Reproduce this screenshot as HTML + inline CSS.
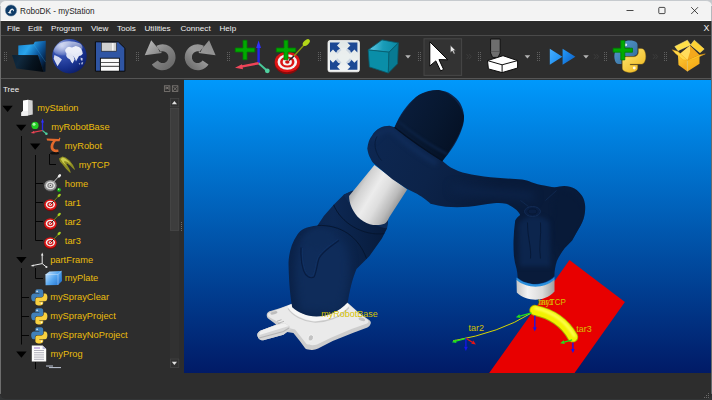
<!DOCTYPE html>
<html><head><meta charset="utf-8"><title>RoboDK - myStation</title>
<style>
*{box-sizing:border-box;margin:0;padding:0}
html,body{width:712px;height:400px;overflow:hidden;background:linear-gradient(#c4c8cc 0,#c4c8cc 30px,#333536 30px);font-family:"Liberation Sans",sans-serif}
#win{position:absolute;left:0;top:0;width:712px;height:398.6px;overflow:hidden;border-radius:6px 6px 6px 6px}
.abs{position:absolute}
#title{left:0;top:0;width:712px;height:21px;background:#f3f3f3;border-top:1px solid #c6cace;border-bottom:1px solid #fdfdfd;border-radius:6px 6px 0 0}
#title .t{position:absolute;left:20px;top:5px;font-size:8.2px;color:#262626;white-space:nowrap;line-height:11px}
#menu{left:0;top:21px;width:712px;height:15px;background:#2b2b2b;border-bottom:1px solid #4a4a4a}
#menu span{position:absolute;top:1.6px;font-size:8.1px;color:#f0f0f0;line-height:11px;white-space:nowrap}
#tool{left:0;top:36px;width:712px;height:43px;background:#2d2d2d;border-bottom:1px solid #555}
#tree{left:0;top:79px;width:184px;height:295px;background:#2d2d2d}
#tree .lbl{position:absolute;font-size:9.3px;color:#eabd0c;line-height:12px;white-space:nowrap}
#view{left:184px;top:79px;width:528px;height:294px;background:linear-gradient(#0099fc,#011a66)}
#status{left:0;top:373px;width:712px;height:27px;background:#2d2d2d}
</style></head><body>
<div id="win">
<div id="title" class="abs"><span class="t">RoboDK - myStation</span></div>
<div id="menu" class="abs">
<span style="left:7px">File</span><span style="left:28px">Edit</span><span style="left:51px">Program</span><span style="left:91px">View</span><span style="left:117px">Tools</span><span style="left:144.5px">Utilities</span><span style="left:180.5px">Connect</span><span style="left:219.5px">Help</span><span style="left:703.6px;font-size:8.8px">X</span>
</div>
<div id="tool" class="abs"></div>
<svg class="abs" style="left:0;top:36px" width="712" height="43" viewBox="0 36 712 43">
<defs>
<g id="grip"><path d="M0.5,0 V10 M2.5,0 V10" stroke="#606060" stroke-width="1" stroke-dasharray="1 1" fill="none"/></g>
<g id="dd"><path d="M0,0 H5.6 L2.8,3.2 Z" fill="#b4b4b4"/></g>
<g id="chev" fill="none" stroke="#3d3d3d" stroke-width="1"><path d="M0,0 L2,2.4 L0,4.8 M2.6,0 L4.6,2.4 L2.6,4.8"/></g>
<g id="plus"><path d="M8,0.300 H12 V8 H19.700 V12 H12 V19.700 H8 V12 H0.300 V8 H8 Z" fill="#00aa00" stroke="#007c00" stroke-width="0.8"/></g>
<linearGradient id="fback" x1="19" y1="44" x2="47" y2="62" gradientUnits="userSpaceOnUse"><stop offset="0" stop-color="#1a86d0"/><stop offset=".3" stop-color="#2aa6ee"/><stop offset=".6" stop-color="#0f5ea4"/><stop offset=".85" stop-color="#062c58"/><stop offset="1" stop-color="#031428"/></linearGradient>
<linearGradient id="ffront" x1="12" y1="55" x2="44" y2="72" gradientUnits="userSpaceOnUse"><stop offset="0" stop-color="#0a2236"/><stop offset=".25" stop-color="#10293e"/><stop offset=".6" stop-color="#06131f"/><stop offset="1" stop-color="#01060c"/></linearGradient>
<radialGradient id="globe" cx="62" cy="46" r="30" gradientUnits="userSpaceOnUse"><stop offset="0" stop-color="#aab8e8"/><stop offset=".35" stop-color="#3450b0"/><stop offset=".75" stop-color="#17308c"/><stop offset="1" stop-color="#0c1e6a"/></radialGradient>
<linearGradient id="gshine" x1="0" y1="40" x2="0" y2="56" gradientUnits="userSpaceOnUse"><stop offset="0" stop-color="#fff" stop-opacity=".8"/><stop offset="1" stop-color="#fff" stop-opacity="0.08"/></linearGradient>
<linearGradient id="undo" x1="145" y1="40" x2="175" y2="72" gradientUnits="userSpaceOnUse"><stop offset="0" stop-color="#c0c0c0"/><stop offset=".45" stop-color="#888888"/><stop offset="1" stop-color="#606060"/></linearGradient>
<linearGradient id="redo" x1="215" y1="40" x2="185" y2="72" gradientUnits="userSpaceOnUse"><stop offset="0" stop-color="#8a8a8a"/><stop offset=".5" stop-color="#9a9a9a"/><stop offset="1" stop-color="#5c5c5c"/></linearGradient>
<linearGradient id="cubetop" x1="368" y1="45" x2="398" y2="48" gradientUnits="userSpaceOnUse"><stop offset="0" stop-color="#6ad0ee"/><stop offset=".5" stop-color="#1a9cb8"/><stop offset="1" stop-color="#0a88a2"/></linearGradient>
<linearGradient id="ffw" x1="550" y1="48" x2="575" y2="65" gradientUnits="userSpaceOnUse"><stop offset="0" stop-color="#48b0ff"/><stop offset=".5" stop-color="#1e8ef0"/><stop offset="1" stop-color="#0c5cc0"/></linearGradient>
<linearGradient id="pyb" x1="0" y1="0" x2="80" y2="80" gradientUnits="userSpaceOnUse"><stop offset="0" stop-color="#5a9fd4"/><stop offset="1" stop-color="#306998"/></linearGradient>
<linearGradient id="pyy" x1="35" y1="30" x2="100" y2="110" gradientUnits="userSpaceOnUse"><stop offset="0" stop-color="#ffe873"/><stop offset="1" stop-color="#f0b820"/></linearGradient>
<linearGradient id="box1" x1="676" y1="50" x2="690" y2="72" gradientUnits="userSpaceOnUse"><stop offset="0" stop-color="#ffdc40"/><stop offset="1" stop-color="#f29a10"/></linearGradient>
<linearGradient id="box2" x1="688" y1="50" x2="700" y2="72" gradientUnits="userSpaceOnUse"><stop offset="0" stop-color="#ffcc30"/><stop offset="1" stop-color="#f0a010"/></linearGradient>
<linearGradient id="fit" x1="0" y1="40" x2="0" y2="72" gradientUnits="userSpaceOnUse"><stop offset="0" stop-color="#dfe6e6"/><stop offset="1" stop-color="#f2f4f4"/></linearGradient>
</defs>
<use href="#grip" x="4" y="52"/><use href="#grip" x="136" y="52"/><use href="#grip" x="227" y="52"/><use href="#grip" x="318" y="52"/><use href="#grip" x="418" y="52"/><use href="#grip" x="478" y="52"/><use href="#grip" x="537" y="52"/><use href="#grip" x="604" y="52"/><use href="#grip" x="664" y="52"/>
<!-- folder -->
<path d="M18.3,45.5 L33.5,44.2 L34.8,41.7 L45.8,40.8 L45.5,71.4 L43.6,72 L37.9,55.2 L18.3,55.2 Z" fill="url(#fback)"/><path d="M33.5,44.2 L45.6,62" stroke="#3ab0f0" stroke-width=".5" opacity=".5"/>
<path d="M12,55 L37.9,55.2 L43.6,72 L16.4,68.6 Z" fill="url(#ffront)"/>
<!-- globe -->
<circle cx="69.5" cy="56.2" r="17.2" fill="url(#globe)"/>
<path d="M65.1,49.9 L67,47.5 L69,46.7 L72,47.4 L75.8,46.1 L79,47 L80.9,48.6 L82.2,51 L82.8,53.7 L81,55.5 L79,56 L77.6,58.5 L76,61.5 L75,58.5 L73.6,56.5 L71.6,55 L69,54 L67,53.7 L65.5,52 Z" fill="#e4e8f6"/>
<path d="M66.6,52.5 L69,52.5 L72,53.5 L73.8,57 L74.6,59.4 L73.6,61.5 L72.7,63.4 L71.2,62 L70,59.5 L67.6,58 L66.2,56 Z" fill="#dfe4f4"/>
<path d="M54.4,55 L58.8,56.9 L62,59.4 L59.4,63.2 L57.5,66.3 L55.6,62.5 L53.7,58.8 Z" fill="#d4daf0"/>
<path d="M80.6,57.6 L82.8,58.6 L82.2,61 L80.8,60 Z M81.6,62.6 L83.2,62.2 L82.4,64.6 L81.2,64.2 Z M78.8,63 L80,63.6 L79.2,65 Z" fill="#c4cce8"/>
<path d="M53.500,51 C56,42 68,38.500 80,43.500 C86,48 81,54 69,55 C61,56 55,55 53.500,51 Z" fill="url(#gshine)" opacity=".85"/>
<!-- floppy -->
<path d="M95.4,41.8 H118.3 L124.9,48.2 V71.2 H95.4 Z" fill="#2f55a4" stroke="#0a0a0a" stroke-width="1"/>
<rect x="101.3" y="42.3" width="15.2" height="8.9" fill="#cfcfcf" stroke="#1a1a1a" stroke-width=".6"/>
<rect x="112" y="43" width="1.6" height="7.4" fill="#f4f4f4"/>
<rect x="100.4" y="58.2" width="19" height="13" fill="#fbfbfb" stroke="#0a0a0a" stroke-width=".9"/>
<path d="M101,62.5 H119 M101,66.4 H119" stroke="#5a5a5a" stroke-width="1.1"/>
<!-- undo -->
<path d="M156.5,45.7 A13.0,13.0 0 1 1 151.8,64.5 L157.7,60.5 A5.9,5.9 0 1 0 159.8,52.0 Z M151.2,40.3 L144.7,55.3 L161.9,52.9 Z" fill="url(#undo)"/>
<!-- redo -->
<path d="M203.8,45.7 A13.0,13.0 0 1 0 208.5,64.5 L202.6,60.5 A5.9,5.9 0 1 1 200.5,52.0 Z M209.1,40.3 L215.6,55.3 L198.4,52.9 Z" fill="url(#redo)"/>
<!-- add frame -->
<use href="#plus" x="235" y="40"/>
<path d="M258.6,63.2 V46" stroke="#2222ee" stroke-width="2.4"/><path d="M258.6,40.6 L261,48 H256.2 Z" fill="#3030ff"/>
<path d="M258.6,63.2 L268.6,72" stroke="#48c898" stroke-width="2"/><circle cx="267.3" cy="70.8" r="2.4" fill="#50d0a0"/>
<path d="M258.6,63.2 L241,66.6" stroke="#ee4458" stroke-width="2.4"/><path d="M235,67.7 L242,64.2 L243,69.2 Z" fill="#f0485c"/>
<!-- add target -->
<ellipse cx="287.3" cy="63.4" rx="12.6" ry="10.6" fill="#8a0a0a"/>
<ellipse cx="287.3" cy="62" rx="12.6" ry="10.2" fill="#dd1414"/>
<ellipse cx="287.3" cy="62" rx="9.8" ry="7.8" fill="#f4f4f4"/>
<ellipse cx="287.3" cy="62" rx="7.2" ry="5.6" fill="#dd1414"/>
<ellipse cx="287.3" cy="62" rx="4.6" ry="3.5" fill="#f4f4f4"/>
<ellipse cx="287.3" cy="62" rx="2.2" ry="1.7" fill="#cc1010"/>
<use href="#plus" x="276" y="40"/>
<path d="M289,60.5 L294,56" stroke="#222" stroke-width="1.6"/><path d="M294,56 L304.5,44.5" stroke="#8c9a10" stroke-width="1.3"/>
<ellipse cx="306.3" cy="42.6" rx="4.2" ry="2.4" transform="rotate(-42 306.3 42.6)" fill="#b4d818"/>
<!-- fit -->
<rect x="328" y="40.6" width="31.4" height="31.2" rx="2" fill="url(#fit)" stroke="#fafafa" stroke-width=".8"/>
<g fill="#1c4894"><path d="M330,42.6 H340 L337,45.6 L341.5,50 L337.4,54.1 L333,49.6 L330,52.6 Z"/><path d="M357.4,42.6 V52.6 L354.4,49.6 L350,54.1 L345.9,50 L350.4,45.6 L347.4,42.6 Z"/><path d="M330,69.8 V59.8 L333,62.8 L337.4,58.3 L341.5,62.4 L337,66.8 L340,69.8 Z"/><path d="M357.4,69.8 H347.4 L350.4,66.8 L345.9,62.4 L350,58.3 L354.4,62.8 L357.4,59.8 Z"/></g>
<circle cx="343.7" cy="56.2" r="8.5" fill="#eaefef" opacity=".85"/>
<!-- cube -->
<path d="M382,39.9 L398.3,43 L389,52.2 L368.2,49.9 Z" fill="url(#cubetop)" stroke="#075e70" stroke-width=".8" stroke-linejoin="round"/>
<path d="M368.2,49.9 L389,52.2 L388.3,73.1 L369.4,66.9 Z" fill="#0a8ea8" stroke="#075e70" stroke-width=".8" stroke-linejoin="round"/>
<path d="M389,52.2 L398.3,43 L397.5,63.8 L388.3,73.1 Z" fill="#087a92" stroke="#075e70" stroke-width=".8" stroke-linejoin="round"/>
<use href="#dd" x="405.2" y="55.2"/>
<!-- cursor button -->
<rect x="424" y="38.8" width="37.6" height="36.6" fill="#333333" stroke="#474747" stroke-width="1"/>
<path d="M429.8,41.8 L429.8,66 L435.8,60.9 L440.6,70.9 L443.6,69.4 L439,59.6 L447.8,59.8 Z" fill="#ffffff" stroke="#050505" stroke-width="1" stroke-linejoin="round"/>
<path d="M450.4,45.3 V52.4 L452.3,51 L453.9,54 L455.1,53.4 L453.6,50.5 L455.6,50.4 Z" fill="#e8e8e8" stroke="#3a3a3a" stroke-width=".5"/>
<use href="#chev" x="466.6" y="54.2"/>
<!-- mill -->
<path d="M490.6,39 H500.2 V53 L498,57.4 H492.6 L490.6,53 Z" fill="#6e6e6e" stroke="#0c0c0c" stroke-width=".9"/>
<path d="M490.6,51.5 H500.2" stroke="#4a4a4a" stroke-width=".6"/>
<path d="M487.5,60.6 L503,55.7 L517.6,60.6 L517.6,68 L502.1,72.6 L488.4,68.9 Z" fill="#ffffff" stroke="#0c0c0c" stroke-width="1" stroke-linejoin="round"/>
<path d="M487.5,60.6 L502.1,64.8 L517.6,60.6 M502.1,64.8 V72.6" fill="none" stroke="#0c0c0c" stroke-width="1"/>
<use href="#dd" x="524.6" y="55.2"/>
<!-- ff -->
<path d="M549.8,48.8 L562.4,56.8 L549.8,64.8 Z M562.6,48.8 L575.4,56.8 L562.6,64.8 Z" fill="url(#ffw)"/>
<use href="#dd" x="583.2" y="55.2"/>
<use href="#chev" x="594" y="54.2"/>
<!-- python -->
<g transform="translate(614.3,40.6) scale(0.283)">
<path d="M54.9,0 C50.3,0 45.9,0.4 42.1,1.1 C30.8,3.1 28.7,7.3 28.7,15 V25.2 H55.4 V28.600 H18.700 C10.900,28.600 4.100,33.300 2,42.200 C-0.500,52.400 -0.600,58.800 2,69.500 C3.900,77.400 8.400,83 16.200,83 H25.400 V70.800 C25.400,62 33,54.200 42.100,54.200 H68.800 C76.200,54.200 82.100,48.100 82.100,40.700 V15 C82.100,7.800 76,2.300 68.800,1.100 C64.200,0.300 59.500,0 54.900,0 Z" fill="url(#pyb)"/>
<circle cx="40.4" cy="14.9" r="5" fill="#e8f0f8"/>
<path d="M85.600,28.600 V40.500 C85.600,49.700 77.800,57.500 68.900,57.500 H42.100 C34.800,57.500 28.700,63.800 28.700,71.100 V96.600 C28.700,103.900 35,108.200 42.100,110.300 C50.600,112.800 58.700,113.200 68.900,110.300 C75.600,108.300 82.200,104.400 82.200,96.600 V86.400 H55.500 V83 H95.500 C103.300,83 106.200,77.600 108.900,69.500 C111.700,61.100 111.600,53 108.900,42.200 C107,34.500 103.300,28.600 95.500,28.600 Z" fill="url(#pyy)" stroke="#c89a18" stroke-width="1.5"/>
<circle cx="70.5" cy="96.8" r="5" fill="#fffbe8"/>
</g>
<use href="#plus" x="612.8" y="40.2" transform="translate(0 0)"/>
<use href="#chev" x="653" y="54.2"/>
<!-- box -->
<path d="M678,55.400 L690,45.500 L699.500,54.900 L687.400,60.200 Z" fill="#f4a81c"/>
<path d="M678,55.400 L690,45.500 L690,52 L687.400,60.200 Z" fill="#ffdc5c"/>
<path d="M674.800,46.500 L687.400,40.200 L690.600,44.900 L678,50.700 Z" fill="#ffe048" stroke="#ffec90" stroke-width=".5"/>
<path d="M690.600,44.900 L694.300,40.200 L704.200,49.100 L700,52.800 Z" fill="#ffd234" stroke="#ffe880" stroke-width=".5"/>
<path d="M678,55.400 L687.400,60.200 L687.400,71.400 L678.500,64.900 Z" fill="url(#box1)"/>
<path d="M687.400,60.200 L699.500,54.900 L699.500,63.800 L687.400,71.400 Z" fill="url(#box2)"/>
<path d="M687.400,60.200 V71.400" stroke="#ffe890" stroke-width=".6"/>
<path d="M672.200,49.700 L678,51.500 L687.400,60.200 L683,59.800 L675.500,53.500 Z" fill="#ffd848" stroke="#f0a010" stroke-width=".4"/>
<path d="M687.400,60.200 L699.500,54.900 L705.300,53.900 L693.200,59.600 Z" fill="#ffc428" stroke="#f0a010" stroke-width=".4"/>
</svg>

<div id="tree" class="abs"><span class="lbl" style="left:3px;top:4.6px;color:#f0f0f0;font-size:8px">Tree</span><span class="lbl" style="left:37.2px;top:23.3px">myStation</span><span class="lbl" style="left:51.2px;top:42.3px">myRobotBase</span><span class="lbl" style="left:64.8px;top:61.3px">myRobot</span><span class="lbl" style="left:78.8px;top:80.3px">myTCP</span><span class="lbl" style="left:64.8px;top:98.8px">home</span><span class="lbl" style="left:64.8px;top:117.8px">tar1</span><span class="lbl" style="left:64.8px;top:136.8px">tar2</span><span class="lbl" style="left:64.8px;top:155.8px">tar3</span><span class="lbl" style="left:50.2px;top:174.8px">partFrame</span><span class="lbl" style="left:64.7px;top:193.3px">myPlate</span><span class="lbl" style="left:50.2px;top:212.3px">mySprayClear</span><span class="lbl" style="left:50.2px;top:231.3px">mySprayProject</span><span class="lbl" style="left:50.2px;top:250.3px">mySprayNoProject</span><span class="lbl" style="left:50.6px;top:269.3px">myProg</span></div>
<svg class="abs" style="left:0;top:79px" width="184" height="295" viewBox="0 79 184 295">
<defs>
<g id="tri"><path d="M0,0 H10.4 L5.2,6.2 Z" fill="#000"/></g>
<g id="tgt">
<ellipse cx="0" cy="1" rx="6.2" ry="5.6" fill="#7a0808"/>
<ellipse cx="0" cy="0" rx="6.2" ry="5.4" fill="#dc1818"/>
<ellipse cx="0" cy="0" rx="4.6" ry="3.9" fill="#f2f2f2"/>
<ellipse cx="0" cy="0" rx="3.1" ry="2.6" fill="#dc1818"/>
<ellipse cx="0" cy="0" rx="1.7" ry="1.4" fill="#f2f2f2"/>
<ellipse cx="0" cy="0" rx=".8" ry=".7" fill="#c01010"/>
<path d="M0.8,-0.8 L3.5,-3.5" stroke="#222" stroke-width="1"/><path d="M3.5,-3.5 L8.2,-8.6" stroke="#7c8c10" stroke-width=".9"/>
<ellipse cx="8.8" cy="-9.2" rx="2" ry="1.2" transform="rotate(-45 8.8 -9.2)" fill="#a8d020"/>
</g>
<g id="py"><g transform="scale(0.146)">
<path d="M54.9,0 C50.3,0 45.9,0.4 42.1,1.1 C30.8,3.1 28.7,7.3 28.7,15 V25.2 H55.4 V28.600 H18.700 C10.900,28.600 4.100,33.300 2,42.200 C-0.500,52.400 -0.600,58.800 2,69.500 C3.900,77.400 8.400,83 16.200,83 H25.400 V70.800 C25.400,62 33,54.200 42.100,54.200 H68.800 C76.200,54.200 82.100,48.100 82.100,40.700 V15 C82.100,7.800 76,2.300 68.800,1.100 C64.200,0.300 59.500,0 54.900,0 Z" fill="#4180b8"/>
<circle cx="40.4" cy="14.9" r="5.500" fill="#e8f0f8"/>
<path d="M85.600,28.600 V40.500 C85.600,49.700 77.800,57.500 68.900,57.500 H42.100 C34.800,57.500 28.700,63.800 28.700,71.100 V96.600 C28.700,103.900 35,108.200 42.100,110.300 C50.600,112.800 58.700,113.200 68.900,110.300 C75.600,108.300 82.200,104.400 82.200,96.600 V86.400 H55.500 V83 H95.500 C103.300,83 106.200,77.600 108.900,69.500 C111.700,61.100 111.600,53 108.900,42.200 C107,34.500 103.300,28.600 95.500,28.600 Z" fill="#f8d040"/>
<circle cx="70.5" cy="96.8" r="5.500" fill="#fffbe8"/>
</g></g>
<linearGradient id="st" x1="21" y1="0" x2="33" y2="0" gradientUnits="userSpaceOnUse"><stop offset="0" stop-color="#ffffff"/><stop offset=".55" stop-color="#e8e8e8"/><stop offset="1" stop-color="#a8a8a8"/></linearGradient>
<linearGradient id="plt" x1="45" y1="271" x2="62" y2="285" gradientUnits="userSpaceOnUse"><stop offset="0" stop-color="#d8ecff"/><stop offset=".5" stop-color="#58a8f0"/><stop offset="1" stop-color="#1868c8"/></linearGradient>
</defs>
<!-- header -->
<g fill="none" stroke="#8c8782" stroke-width=".7"><rect x="164.3" y="85.8" width="5.6" height="5.800"/><rect x="172.300" y="85.800" width="5.600" height="5.800"/><path d="M173,86.500 L177.200,90.900 M177.200,86.500 L173,90.900"/><path d="M165,88 H169.200 M166,86.500 L168.500,89.500 M168.500,86.500 L166,89.500"/></g>
<!-- connector lines -->
<g stroke="#050505" stroke-width="1" fill="none">
<path d="M21.5,136 V249.5 M21.5,268 V344.5"/>
<path d="M35.5,155 V240.5 M35.5,183.5 H43 M35.5,202.5 H43 M35.5,221.5 H43 M35.5,240.5 H43"/>
<path d="M49.5,154 V164.5 H56"/>
<path d="M35.5,268 V278.5 H43"/>
<path d="M21.5,297.5 H29 M21.5,316.5 H29 M21.5,335.5 H29"/>
<path d="M35.5,362 V369"/>
</g>
<!-- arrows -->
<use href="#tri" x="2.4" y="105.8"/><use href="#tri" x="16" y="124.8"/><use href="#tri" x="30" y="143.6"/><use href="#tri" x="16.2" y="257"/><use href="#tri" x="16.2" y="351.6"/>
<!-- station icon -->
<path d="M23,100.400 L28,99.800 L28,115.600 L21.400,116 L21.400,112.500 L23,111 Z" fill="#fdfdfd"/>
<path d="M28,99.800 L32.600,100.600 L32.800,114.600 L28,115.600 Z" fill="#d2d2d2"/>
<path d="M21.400,112.500 L23,111 L28,111 V115.600 L21.400,116 Z" fill="#f0f0f0"/>
<!-- robotbase icon -->
<circle cx="35" cy="125.4" r="3.6" fill="#22cc22"/><circle cx="34" cy="124.2" r="1.5" fill="#a8f8a8"/>
<path d="M42.5,130.5 V121" stroke="#2828f0" stroke-width="1.3"/><path d="M42.5,118.6 L43.9,122.4 H41.1 Z" fill="#3030ff"/>
<path d="M42.5,130.5 L33,132.4" stroke="#e84050" stroke-width="1.2"/><path d="M30.6,132.9 L34,131 L34.5,133.6 Z" fill="#f04858"/>
<path d="M42.5,130.5 L46.6,134" stroke="#48c898" stroke-width="1.1"/><circle cx="46.4" cy="133.8" r="1.3" fill="#50d0a0"/>
<!-- robot icon -->
<ellipse cx="54.600" cy="153.200" rx="4.600" ry="1.300" fill="#101010"/>
<path d="M46.600,138.400 L58.800,139 L59.400,137.600 L60.400,138 L59.600,141.200 L55.800,141.200 C54,143.400 53,145.400 53.400,147.400 C53.800,149.200 55.600,150 58.200,149.400 L58.600,151.800 C55,152.800 51.800,151.600 50.800,148.800 C50,146.200 51,143.400 53,141 L47,140.600 Z" fill="#e26a2c"/>
<!-- tcp icon -->
<path d="M59,158.600 L62.400,156.400 L65.600,157.400 L69.600,160.600 L73,165 L75,169.400 L74.400,169.800 L70,165.600 L67,163.400 L66.400,164 L69.200,168.400 L70.800,172.400 L70,172.800 L66,168.800 L62.600,164.600 L60,161.800 Z" fill="#8e8e22"/>
<path d="M60.600,159 L62.800,157.600 L65.200,158.600 L68.600,161.200 L71.600,165 L67.600,162 L64.600,161 L64,162 L66.600,166 L62.800,162.600 Z" fill="#cccc4c"/>
<!-- home -->
<g transform="translate(50.4 185.4)"><ellipse cx="0" cy="1" rx="6.2" ry="5.6" fill="#3c3c3c"/><ellipse cx="0" cy="0" rx="6.2" ry="5.4" fill="#8c8c8c"/><ellipse cx="0" cy="0" rx="4.6" ry="3.9" fill="#e6e6e6"/><ellipse cx="0" cy="0" rx="3.1" ry="2.6" fill="#8c8c8c"/><ellipse cx="0" cy="0" rx="1.7" ry="1.4" fill="#e6e6e6"/><ellipse cx="0" cy="0" rx=".8" ry=".7" fill="#555"/><path d="M0.8,-0.8 L8.4,-9" stroke="#c8c8c8" stroke-width="1"/><ellipse cx="9" cy="-9.6" rx="2" ry="1.3" transform="rotate(-45 9 -9.6)" fill="#f0f0f0"/><circle cx="8.6" cy="4.4" r="1.9" fill="#18c018"/><circle cx="8.2" cy="3.9" r=".7" fill="#b0ffb0"/></g>
<use href="#tgt" x="50.4" y="204.6"/><use href="#tgt" x="50.4" y="223.6"/><use href="#tgt" x="50.4" y="242.6"/>
<!-- partFrame icon -->
<g stroke="#e8e8e8" stroke-width="1" fill="none"><path d="M42.2,263.6 V254.6 M42.2,263.6 L32.4,265.6 M42.2,263.6 L46.4,267"/></g>
<path d="M42.2,252.6 L43.4,255.6 H41 Z M30.6,266 L33.4,264.4 L33.8,266.6 Z" fill="#f0f0f0"/><circle cx="46.4" cy="267" r="1.1" fill="#e0e0e0"/>
<!-- plate icon -->
<path d="M45.4,274.6 L49.4,271.4 L61.6,271 L62,281 L58,285 L45.6,285.2 Z" fill="url(#plt)"/>
<path d="M45.4,274.6 L58,274.4 L61.6,271 M58,274.4 V285" stroke="#e8f4ff" stroke-width=".6" fill="none" opacity=".7"/>
<!-- python -->
<use href="#py" x="31.2" y="289.2"/><use href="#py" x="31.2" y="308.2"/><use href="#py" x="31.2" y="327.2"/>
<!-- prog -->
<path d="M31.8,345.6 H42.6 L46.2,349 V361.6 H31.8 Z" fill="#fbfbfb"/><path d="M42.6,345.6 V349 H46.2 Z" fill="#b8b8d8"/>
<path d="M34,350.5 H44 M34,352.7 H44 M34,354.9 H44 M34,357.1 H44 M34,359.3 H44" stroke="#9090a0" stroke-width=".7"/><path d="M34,348 H40" stroke="#8050c0" stroke-width=".8"/>
<path d="M46,366 H53 M49,367.6 H61" stroke="#c0c8d8" stroke-width="1"/>
<!-- scrollbar -->
<rect x="170" y="98" width="9.2" height="270" fill="#313131"/><path d="M181.500,222 V231" stroke="#6a6a6a" stroke-width="1" stroke-dasharray="1 1"/>
<rect x="170.400" y="98.400" width="8.400" height="8.400" fill="#303030" stroke="#464646" stroke-width=".7"/><path d="M171.800,104.200 L174.400,101 L177,104.200 Z" fill="#e0e0e0"/>
<rect x="170.400" y="359" width="8.400" height="8.400" fill="#303030" stroke="#464646" stroke-width=".7"/><path d="M171.800,361.800 L174.400,365 L177,361.800 Z" fill="#e0e0e0"/>
<rect x="170.400" y="108.400" width="8.400" height="122" fill="#3d3d3d" stroke="#4a4a4a" stroke-width=".7"/>
</svg>

<svg class="abs" style="left:183.5px;top:79.5px" width="528.5" height="293.7" viewBox="183.5 79.5 528.5 293.7">
<defs>
<linearGradient id="bg" x1="0" y1="79" x2="0" y2="373" gradientUnits="userSpaceOnUse"><stop offset="0" stop-color="#0099fc"/><stop offset="1" stop-color="#011a66"/></linearGradient>
<linearGradient id="cyl" x1="350" y1="196" x2="389" y2="219" gradientUnits="userSpaceOnUse"><stop offset="0" stop-color="#b4b4b4"/><stop offset=".12" stop-color="#d2d2d2"/><stop offset=".38" stop-color="#ececec"/><stop offset=".6" stop-color="#dedede"/><stop offset=".85" stop-color="#bababa"/><stop offset="1" stop-color="#989898"/></linearGradient>
<linearGradient id="fl" x1="516" y1="0" x2="553" y2="0" gradientUnits="userSpaceOnUse"><stop offset="0" stop-color="#c6c6c6"/><stop offset=".3" stop-color="#f3f3f3"/><stop offset=".7" stop-color="#dadada"/><stop offset="1" stop-color="#a4a4a4"/></linearGradient>
<linearGradient id="base" x1="288" y1="0" x2="388" y2="0" gradientUnits="userSpaceOnUse"><stop offset="0" stop-color="#0a2147"/><stop offset=".45" stop-color="#0d2853"/><stop offset="1" stop-color="#071a3a"/></linearGradient>
<linearGradient id="arm" x1="372" y1="140" x2="490" y2="200" gradientUnits="userSpaceOnUse"><stop offset="0" stop-color="#0d2751"/><stop offset=".5" stop-color="#0c2349"/><stop offset=".8" stop-color="#0a1e40"/><stop offset="1" stop-color="#091b3a"/></linearGradient>
<linearGradient id="plate" x1="260" y1="305" x2="360" y2="345" gradientUnits="userSpaceOnUse"><stop offset="0" stop-color="#e8e8e8"/><stop offset="1" stop-color="#cfcfcf"/></linearGradient>
<filter id="b2" color-interpolation-filters="sRGB" filterUnits="userSpaceOnUse" x="150" y="50" width="600" height="350"><feGaussianBlur stdDeviation="2"/></filter>
<filter id="b4" color-interpolation-filters="sRGB" filterUnits="userSpaceOnUse" x="150" y="50" width="600" height="350"><feGaussianBlur stdDeviation="4"/></filter>
<filter id="b1" color-interpolation-filters="sRGB" filterUnits="userSpaceOnUse" x="150" y="50" width="600" height="350"><feGaussianBlur stdDeviation="0.8"/></filter>
<linearGradient id="cap" x1="400" y1="100" x2="462" y2="135" gradientUnits="userSpaceOnUse"><stop offset="0" stop-color="#0a1d3c"/><stop offset=".6" stop-color="#07172f"/><stop offset="1" stop-color="#051125"/></linearGradient>
<clipPath id="armclip"><use href="#armp"/></clipPath>
<clipPath id="baseclip"><use href="#basep"/></clipPath>
</defs>
<rect x="183" y="79" width="530" height="295" fill="url(#bg)"/>
<!-- red plate -->
<polygon points="569,259.600 624.400,301.400 573,374 487.600,374" fill="#e80000"/>
<!-- base plate -->
<path d="M266.4,313.3 C267,311.600 268.500,310.800 270,310.500 L279.200,307.800 L289.300,304.100 L346.800,302 L359.600,313.300 L368.700,319.600 C370.400,320.800 370.600,322.400 370.100,323.300 C369.500,325 368.500,326.200 366.900,327 L352.200,332.400 L332.200,340.600 L317.600,348 C315.500,349 313.500,349.500 311.200,349.400 C308.500,349.300 306.500,349 304.800,348 L299.300,340.600 L292.900,332.400 L286.500,331.500 L282.900,334.300 L262.800,339.700 C260.800,339.800 259.200,339.200 258.200,337.900 C257,336.500 256.600,334.800 256.900,333.300 C257.600,331.600 259,330.400 261,329.700 L275.600,324.200 L273.700,322.400 L267.300,317.800 C266.200,316.500 266,314.800 266.400,313.300 Z" fill="#cdcdcd"/>
<path d="M267.500,313 L279.200,308.200 L289.300,304.600 L346.800,302.500 L359,313.500 L367.500,319.800 C368.500,321 368,322.200 366.500,323 L351,328.600 L331,337 L316.500,344 C313.500,345.200 309,345 306,343.600 L300.500,336.500 L294.500,329 L288,327.500 L277.500,321.600 L268.500,316.600 C267.300,315.600 267,314.200 267.500,313 Z" fill="#eaeaea"/>
<path d="M286.500,331.500 L282.900,334.300 L262.800,339.700 C260.800,339.800 259.200,339.200 258.200,337.900 C257,336.500 256.600,334.800 256.900,333.300 C257.600,331.600 259,330.400 261,329.700 L275.600,324.200 L284,322.500 L289,325.500 L290,329 Z" fill="#d6d6d6"/>
<path d="M261,330 L276,324.400 L284,322.800 L288.500,325.500 L272,330.500 L259,334.500 C259,332.500 259.600,331 261,330 Z" fill="#f0f0f0"/>
<path d="M258.500,337.500 L283,331 L288.500,327.500" stroke="#b4b4b4" stroke-width="1.2" fill="none"/>
<path d="M289,304.500 C292,310 300,315.500 312,317.800 C324,319 338,315 346.800,303" stroke="#f6f6f6" stroke-width="5" fill="none"/>
<path d="M287.500,308 C292,315 302,320.500 313,321.500 C326,322 340,317 348.500,307" stroke="#c9c9c9" stroke-width="1.2" fill="none"/>
<ellipse cx="273.400" cy="312.400" rx="3.600" ry="1.500" transform="rotate(-14 273.4 312.4)" fill="#bdbdbd"/>
<ellipse cx="310.300" cy="337.400" rx="2.600" ry="3.200" transform="rotate(20 310.3 337.4)" fill="#c2c2c2" stroke="#f8f8f8" stroke-width=".7"/>
<ellipse cx="361.400" cy="318.700" rx="3.400" ry="1.600" transform="rotate(18 361.4 318.7)" fill="#c2c2c2"/>
<path d="M276.500,320.800 L281,319.200 M277.500,323 L283.500,320.800" stroke="#a8a8a8" stroke-width=".8"/>
<!-- base column + shoulder -->
<path id="basep" d="M291.7,306.8 C290,296 288.4,285 288,262 C288.5,252 291,243 296.8,234.3 C300,229 306,226 317,225 L323.3,215.4 L333.4,204 L343.5,194 L352.4,190 L387.8,218 L386.5,228 L381.4,238 L368.8,255.8 L356,268.5 C352,278 349,290 347.3,301.7 C338,312 326,316 316,316 C306,316 298,312 291.7,306.8 Z" fill="url(#base)"/>
<g clip-path="url(#baseclip)">
<path d="M300,240 C315,228 335,232 345,246 C352,262 348,290 340,310 L300,312 C294,290 292,262 300,240 Z" fill="#0f2c5a" filter="url(#b4)"/>
<path d="M343,194 L352,190 L388,218 L386.500,228 C372,226 352,212 343,194 Z" fill="#0e2a55"/>
<path d="M317,225 C340,224 358,236 366,258" stroke="#061630" stroke-width="1" fill="none"/>
<path d="M333,204 C340,222 362,236 384,233" stroke="#061630" stroke-width="1" fill="none"/>
<ellipse cx="318" cy="238" rx="15" ry="10" transform="rotate(-8 318 238)" fill="#0e2b58" filter="url(#b2)"/>
<path d="M300.500,247 C300,256 301,264 303,270 C305,276 310,278.500 313.500,276.500 C316,272 316.500,264 318.500,258 C322,251 330,246 338.500,240" stroke="#081c40" stroke-width="1.100" fill="none"/>
<path d="M302,247.500 C301.500,256 302.500,264 304.500,269.500 C306.500,274.500 310,276.500 312.500,275 C314.500,271 315,263 317,257.500 C320.500,250 329,245 337.500,239" stroke="#14356a" stroke-width=".8" fill="none" opacity=".7"/>
</g>
<!-- white cylinder -->
<path d="M373.900,164.500 L348.600,195.500 C348.400,202 352,212 359.600,218.500 C364,222 368,223.800 372.600,224.400 C377,224.800 381,224.400 384,223.200 C386,222 387.600,220 388.600,217 L406.700,189 Z" fill="url(#cyl)"/>
<!-- elbow + cap + arm + wrist -->
<path id="armp" d="M366.8,148 C367.5,142 369,138 371.3,135.4 C373.5,131.5 376,129.5 378.9,127.8 C382,126 386,125.3 389,125.3 L394,126.8 C396.5,121 399.5,115 402.9,110.3 C406.5,105 411,100 415.5,96.4 C419.5,93.5 424,91.5 428.1,90.6 C431.5,89.8 435,89.4 438.3,89.6 C443,90.2 447.5,91.8 450.9,93.9 C454.5,96.3 457.6,99.3 459.7,102.8 C461.8,106.5 463.2,111 463.5,115.4 C463.6,119 463.2,122.5 462.3,125.5 C460.8,130.6 458.6,135.9 455.9,140.7 C453,146 449.5,151 445.8,155.8 L442,160.4 C445.5,163.6 449,166.4 453.4,168.5 C459,171.3 465,173 471.1,174 C479,175.5 488,176.6 496.4,177.3 C505,178 514,178.3 521.7,179 C525,179.5 528,180.5 531,181.7 C535,183.3 539.5,184.4 543.8,185 C547,185.7 550.5,186.6 553.9,186.8 C557.5,186.6 560.5,185.4 564,185.5 C568,185.6 571.2,186.4 574,188 C577.3,190 579.8,192.6 581.7,195.6 C583.5,198.6 584.5,202.2 584.7,205.7 C584.9,210 584.3,214.4 583,218.4 C581.5,222.8 579,227 576.6,231 L571.6,240 L564,247.8 C561,252 558.2,256.4 556.4,260.4 C554.8,265.3 554,270.5 553.9,275.6 C549,281 541,283.5 535,283.5 C529,283.5 521,281 517.2,276.9 C517,273.8 516.6,270.8 516,268 C514.8,264 513.9,259.8 513.4,255.4 C513,250.5 512.9,245.3 513,240.2 C513.2,233.5 513.8,226.6 514.7,220 C516,217.5 518,216 519.7,214.6 C519,212.7 517.6,211 516,209.5 C513,206.8 509.5,204.6 505.8,203.2 C501.7,202.3 497.5,202.4 493.2,202.7 C485,203.5 476.5,205.4 468,206.2 C460.5,206.8 452.5,206.8 445,206.2 C440,205.6 435,204.6 430,203.2 C426.5,200 420,195 414.3,192.3 L406.7,188.5 L391.6,178.4 L375,164.5 C372.5,162.5 371,160.4 370,158 C368.3,155 367.2,151.5 366.8,148 Z" fill="url(#arm)"/>
<g clip-path="url(#armclip)">
<path d="M372,140 C378,131 386,128 392,130 C404,142 420,154 436,163" stroke="#102c59" stroke-width="5" fill="none" filter="url(#b2)"/>
<path d="M394,126.8 C396.500,121 402.9,110.3 415.5,96.4 C424,91 435,89 438.3,89.6 C450,92 459.7,102.8 463.5,115.4 C464,125 456,141 442,160.4 C425,150 408,138 394,126.8 Z" fill="url(#cap)"/>
<path d="M394,126.8 C408,138 425,150 442,160.4" stroke="#051022" stroke-width="1.2" fill="none"/>
<path d="M398,121 C412,133 430,145 447,154" stroke="#0c2142" stroke-width="2.5" fill="none" filter="url(#b1)"/>
<path d="M376.500,136 C373,142 374,152 381,160" stroke="#081a38" stroke-width=".8" fill="none"/>
<path d="M455,188 C475,193 500,192 530,196" stroke="#0c2349" stroke-width="8" fill="none" stroke-linecap="round" filter="url(#b4)"/>
<path d="M556,190 C572,190 584,200 583,216 C580,232 570,244 560,254 L552,240 L553,205 Z" fill="#081a38" filter="url(#b2)"/>
<path d="M518,224 C523,214 541,212 549,222 L550,266 L519,266 Z" fill="#0c254d" filter="url(#b2)"/>
<ellipse cx="532" cy="211" rx="8" ry="5" fill="#0a1e42" stroke="#15305a" stroke-width=".8"/>
<ellipse cx="532" cy="211" rx="4.500" ry="2.600" fill="none" stroke="#061630" stroke-width=".8"/>
<path d="M527,222 C527,238 531,246 530,258 M540,222 C541,236 538,246 540,258" stroke="#071835" stroke-width=".9" fill="none"/>
<path d="M545,200 L556,190 M520,200 L528,206" stroke="#122c54" stroke-width=".8"/>
</g>
<!-- ring + flange -->
<path d="M516,277 C521,281.500 529,283.800 535,283.800 C541,283.800 549,281.500 554,276.500 L554,279.500 C549,284.500 541,286.600 535,286.600 C529,286.600 521,284.500 516,280 Z" fill="#2a8fdc"/>
<path d="M516,279.500 C521,284 529,286.200 535,286.200 C541,286.200 549,284 554,279 L554,291 C549,297 541,299.200 535,299.200 C529,299.200 521,297 516.300,292 Z" fill="url(#fl)"/>
<!-- tube -->
<path d="M452.6,340.4 Q500,332 530,313" stroke="#d8d800" stroke-width="1" fill="none"/>
<path d="M534.300,309.800 Q560.300,315.100 572.300,336.500" stroke="#a8a800" stroke-width="11" fill="none" stroke-linecap="round"/>
<path d="M534.300,309.800 Q560.300,315.100 572.300,336.500" stroke="#f2f200" stroke-width="9.2" fill="none" stroke-linecap="round"/><path d="M535,307.800 Q560.800,313.300 573.800,335.500" stroke="#ffff58" stroke-width="2.500" fill="none" stroke-linecap="round" filter="url(#b1)"/>
<!-- frames -->
<g fill="none"><path d="M465.4,337.8 L455.4,340.6" stroke="#1fe01f" stroke-width="1.3"/><path d="M451.4,341.7 L454.9,338.7 L456.0,342.4 Z" fill="#1fe01f"/><path d="M465.4,337.8 L471.8,341.7" stroke="#e81414" stroke-width="1.3"/><path d="M475.4,343.9 L470.8,343.3 L472.8,340.1 Z" fill="#e81414"/><path d="M465.4,337.8 L465.4,346.2" stroke="#1414f0" stroke-width="1.3"/><path d="M465.4,350.4 L463.5,346.2 L467.3,346.2 Z" fill="#1414f0"/><path d="M531.0,312.4 L519.4,315.6" stroke="#1fe01f" stroke-width="1.3"/><path d="M515.4,316.7 L518.9,313.8 L520.0,317.4 Z" fill="#1fe01f"/><path d="M534.3,315.0 L534.3,326.7" stroke="#1414f0" stroke-width="1.3"/><path d="M534.3,330.9 L532.4,326.7 L536.2,326.7 Z" fill="#1414f0"/><path d="M571.7,339.4 L563.7,341.6" stroke="#1fe01f" stroke-width="1.3"/><path d="M559.7,342.7 L563.2,339.8 L564.3,343.4 Z" fill="#1fe01f"/><path d="M572.4,342.0 L572.4,348.4" stroke="#1414f0" stroke-width="1.3"/><path d="M572.4,352.6 L570.5,348.4 L574.3,348.4 Z" fill="#1414f0"/></g>
<g font-family="Liberation Sans, sans-serif" font-size="9" fill="#d6c200">
<text x="320.8" y="317">myRobotBase</text>
<text x="468" y="331">tar2</text>
<text x="575.7" y="332">tar3</text>
<text x="537.4" y="305" fill="#e0a800">tar1</text><text x="538.4" y="305" textLength="27" lengthAdjust="spacingAndGlyphs">myTCP</text>
</g>
</svg>

<div id="status" class="abs"></div>
<svg class="abs" style="left:0;top:0" width="712" height="22" viewBox="0 0 712 22">
<circle cx="11" cy="10.5" r="5.6" fill="#0e3a66"/><circle cx="11" cy="10.5" r="5.6" fill="none" stroke="#5a7a9a" stroke-width=".5"/>
<path d="M7.6,12.6 L9,12 L10,9.8 L12,8.4 L13.4,9 L14,11 L13.2,11.2 L12.6,9.8 L11.2,10.4 L10.6,12.2 L11.8,13.2 L9.4,13.4 Z" fill="#f4f6f8"/>
<path d="M626.5,10.5 H633.5" stroke="#1a1a1a" stroke-width=".8"/>
<rect x="658.8" y="7.4" width="6.2" height="6.2" rx=".8" fill="none" stroke="#1a1a1a" stroke-width=".8"/>
<path d="M691.2,7.2 L698,14 M698,7.2 L691.2,14" stroke="#1a1a1a" stroke-width=".8"/>
</svg>
<svg class="abs" style="left:700px;top:388px" width="12" height="12" viewBox="700 388 12 12"><!-- resize --><g fill="#6a6a6a"><rect x="708" y="393" width="1" height="1"/><rect x="708" y="395" width="1" height="1"/><rect x="706" y="395" width="1" height="1"/><rect x="708" y="397" width="1" height="1"/><rect x="706" y="397" width="1" height="1"/><rect x="704" y="397" width="1" height="1"/></g></svg>

<div id="edgeL" class="abs" style="left:0;top:6px;width:1px;height:15px;background:#c2c6ca"></div><div class="abs" style="left:0;top:21px;width:1px;height:373px;background:#6e6e6e"></div>
<div id="edgeR" class="abs" style="left:711px;top:6px;width:1px;height:15px;background:#b4b8bc"></div><div class="abs" style="left:711px;top:21px;width:1px;height:373px;background:#666a6c"></div>

</div>
</body></html>
